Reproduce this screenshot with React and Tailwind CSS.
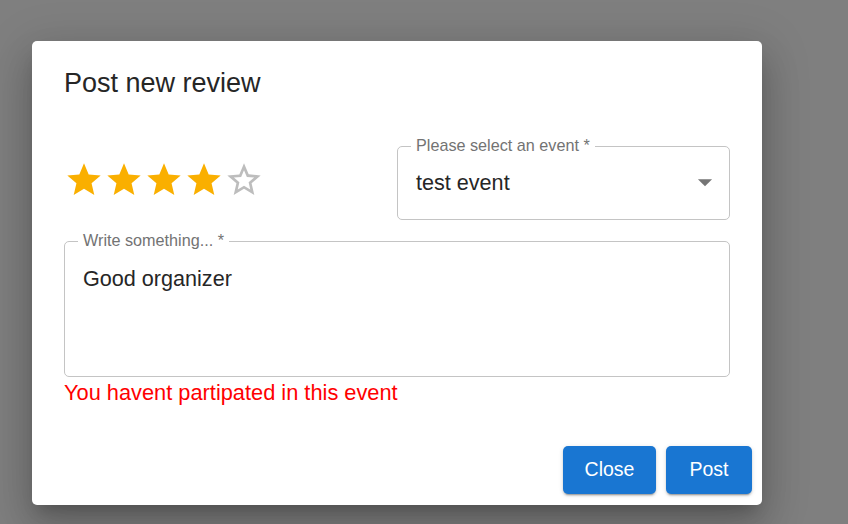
import React, { useState } from "react";

const FULL_STAR =
  "M12 17.27L18.18 21l-1.64-7.03L22 9.24l-7.19-.61L12 2 9.19 8.63 2 9.24l5.46 4.73L5.82 21z";

const EMPTY_STAR =
  "M22 9.24l-7.19-.62L12 2 9.19 8.63 2 9.24l5.46 4.73L5.82 21 12 17.27 18.18 21l-1.63-7.03L22 9.24zM12 15.4l-3.76 2.27 1-4.28-3.32-2.88 4.38-.38L12 6.1l1.71 4.04 4.38.38-3.32 2.88 1 4.28L12 15.4z";

function Star({ filled }) {
  return (
    <svg
      viewBox="0 0 24 24"
      className={`w-[40px] h-[40px] ${
        filled ? "fill-[#faaf00]" : "fill-[#bdbdbd]"
      }`}
    >
      <path d={filled ? FULL_STAR : EMPTY_STAR} />
    </svg>
  );
}

function App() {
  const [rating] = useState(4);

  return (
    <div
      className="h-[524px] w-full overflow-hidden bg-[#7f7f7f] pt-[41px] pl-[32px]"
      style={{ fontFamily: '"Liberation Sans", Arial, sans-serif' }}
    >
      {/* DIALOG */}

      <div className="w-[730px] h-[464px] bg-white rounded-[5px] flex flex-col shadow-[0_11px_15px_-7px_rgba(0,0,0,0.2),0_24px_38px_3px_rgba(0,0,0,0.14),0_9px_46px_8px_rgba(0,0,0,0.12)]">

        <h2 className="pt-[22px] px-[32px] text-[27px] leading-[40px] text-[#262626]">
          Post new review
        </h2>

        <div className="px-[32px]">

          {/* RATING + EVENT */}

          <div className="flex items-start justify-between mt-[43px]">

            <div className="flex mt-[14px]">
              {[1, 2, 3, 4, 5].map((n) => (
                <Star key={n} filled={n <= rating} />
              ))}
            </div>

            <div className="relative w-[333px] h-[74px] border border-[#c4c4c4] rounded-[5px] flex items-center pl-[18px]">

              <span className="absolute left-[13px] top-[-12px] bg-white px-[5px] text-[16.2px] leading-[20px] text-[#737373]">
                Please select an event *
              </span>

              <span className="text-[21.6px] leading-[30px] text-[#262626]">
                test event
              </span>

              <svg
                viewBox="0 0 24 24"
                className="absolute right-[7px] top-[18px] w-[34px] h-[34px] fill-[#757575]"
              >
                <path d="M7 10l5 5 5-5z" />
              </svg>

            </div>

          </div>

          {/* MESSAGE */}

          <div className="relative mt-[21px] h-[136px] border border-[#c4c4c4] rounded-[5px] pt-[21px] pl-[18px]">

            <span className="absolute left-[13px] top-[-12px] bg-white px-[5px] text-[16.2px] leading-[20px] text-[#737373]">
              Write something... *
            </span>

            <p className="text-[21.6px] leading-[31px] text-[#262626]">
              Good organizer
            </p>

          </div>

          <p className="mt-[4px] text-[21.8px] leading-[24px] text-[#ff0000]">
            You havent partipated in this event
          </p>

        </div>

        {/* ACTIONS */}

        <div className="mt-auto flex justify-end gap-[10px] pr-[10px] pb-[11px]">

          <button className="w-[93px] h-[48px] rounded-[5px] bg-[#1976d2] text-white text-[19.5px] shadow-[0_3px_1px_-2px_rgba(0,0,0,0.2),0_2px_2px_0_rgba(0,0,0,0.14),0_1px_5px_0_rgba(0,0,0,0.12)]">
            Close
          </button>

          <button className="w-[86px] h-[48px] rounded-[5px] bg-[#1976d2] text-white text-[19.5px] shadow-[0_3px_1px_-2px_rgba(0,0,0,0.2),0_2px_2px_0_rgba(0,0,0,0.14),0_1px_5px_0_rgba(0,0,0,0.12)]">
            Post
          </button>

        </div>

      </div>
    </div>
  );
}

export default App;
